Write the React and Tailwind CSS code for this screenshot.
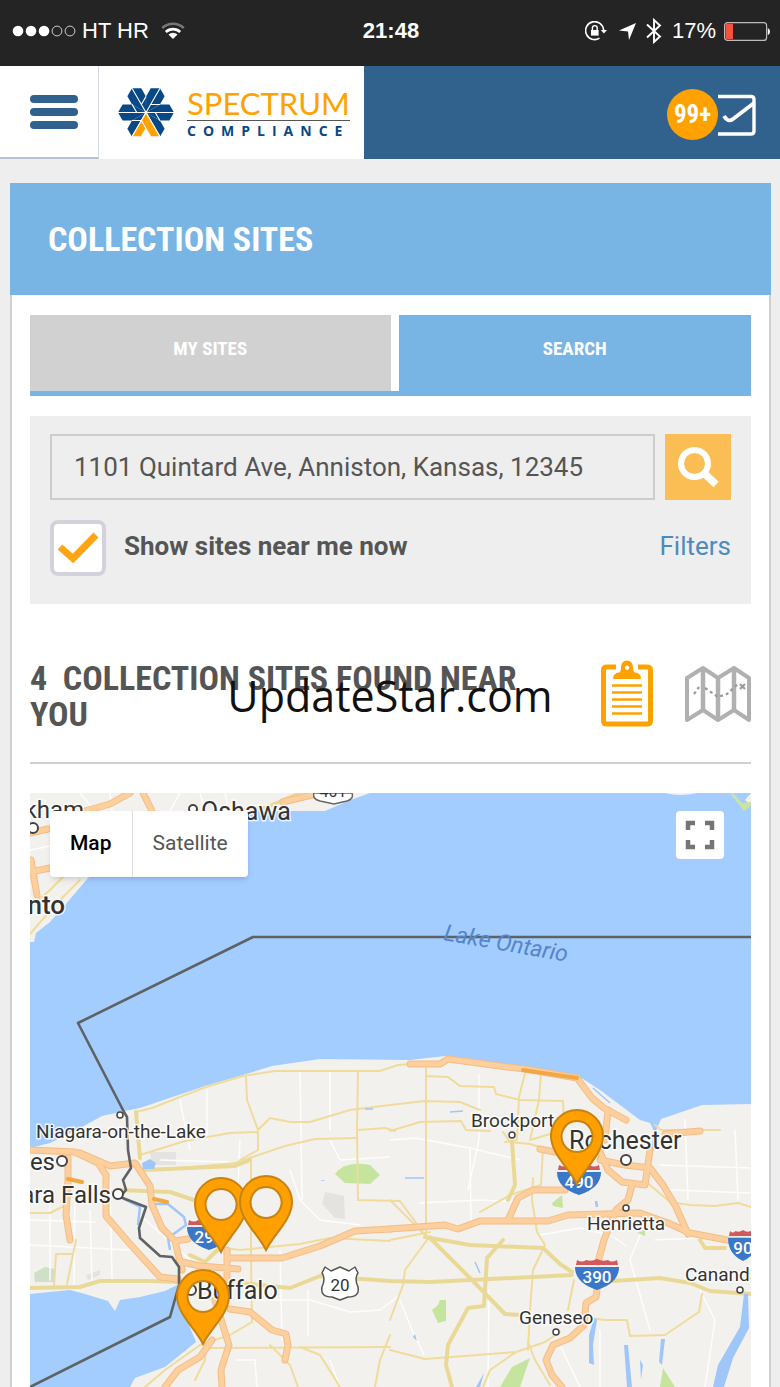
import { useState } from "react";

const LOCAL_ROADS = [
  "M300 1072 L302 1200 M330 1072 L330 1130 M207 1090 L207 1140 M180 1100 L190 1150 M479 1075 L479 1140 L468 1190",
  "M240 1140 L238 1190 L252 1215 M330 1140 L340 1160 L390 1157 M390 1140 L415 1138 L470 1148 L520 1160",
  "M420 1203 L480 1200 L520 1202 M470 1150 L471 1220 M280 1250 L282 1340 M308 1290 L308 1335",
  "M240 1300 L310 1300 L350 1312 L380 1310 L400 1295 M640 1235 L630 1260 L650 1330 M655 1240 L700 1238",
  "M540 1235 L580 1228 L612 1236 L626 1246 M685 1120 L688 1200 M735 1130 L738 1200 M660 1165 L751 1168 M670 1190 L751 1193",
  "M489 1290 L488 1387 M400 1300 L412 1330 L424 1355 M50 1190 L50 1280 M75 1190 L74 1285 M90 1210 L92 1280 M110 1180 L112 1280",
  "M30 1245 L130 1250 M30 1220 L95 1222 M140 1215 L190 1260 M160 1160 L230 1162 M290 1170 L300 1200 L320 1220 L360 1225",
  "M235 1360 L255 1360 L257 1387 M330 1360 L340 1387 M700 1290 L715 1320 L705 1387 M600 1330 L600 1387 M560 1345 L580 1387",
  "M45 800 L60 870 M30 850 L50 846 M80 793 L95 811 M110 793 L112 811 M180 793 L170 811 M200 793 L205 811 M225 793 L228 806",
];

const MINOR_ROADS = [
  "M136 1112 L152 1108 L180 1097 L206 1087 L243 1076 L275 1071 L380 1071 L398 1065 L410 1064",
  "M246 1077 L247 1100 L258 1130 L270 1118 L290 1122 L310 1122 L350 1110 L390 1105 L425 1101 L460 1102 L480 1110",
  "M140 1155 L185 1141 L230 1133 L258 1132 L258 1150 L240 1160",
  "M358 1072 L357 1130 L358 1200 L400 1201 L425 1235",
  "M358 1130 L385 1128 L395 1131 M160 1170 L235 1163 L285 1146 L315 1139 L357 1138",
  "M426 1068 L426 1238 M426 1076 L448 1077 L460 1086 L494 1087 L496 1094 L520 1100 L563 1101 L564 1120",
  "M390 1131 L420 1122 L461 1121 L466 1130 L490 1131 M525 1073 L519 1097 L517 1140 L505 1142",
  "M541 1073 L539 1100 L530 1140 L560 1131 M503 1132 L510 1142 L530 1144 L543 1148 L541 1185 L510 1195 L480 1212",
  "M30 1213 L50 1213 L66 1205 M56 1254 L72 1254 M76 1240 L67 1284 M56 1254 L54 1286",
  "M251 1160 L251 1258 L252 1322 L230 1335 L200 1345 M200 1245 L240 1250 L300 1244 L330 1238 L390 1241",
  "M210 1348 L390 1347 M300 1347 L320 1355 L340 1387 M270 1345 L290 1365 L298 1387 M390 1335 L380 1360 L375 1387",
  "M533 1178 L532 1200 L537 1232 L545 1245 L533 1270 L530 1310 L528 1350",
  "M574 1280 L568 1310 M590 1318 L605 1320 L627 1320 L630 1336 L665 1335 L690 1318 L699 1312 L702 1294",
  "M390 1350 L425 1359 L516 1352 L545 1342 L560 1332 M528 1342 L535 1360 L550 1385 M516 1352 L490 1370 L483 1387",
  "M644 1180 L670 1202 L690 1205 L715 1206 L738 1203 L751 1207 M430 1236 L405 1270 L403 1285 L390 1320",
  "M145 1387 L165 1370 L200 1345 M195 1380 L205 1360 L206 1345 M655 1125 L661 1130 L720 1130",
  "M390 1240 L430 1232 M390 1200 L410 1220 L428 1238 M30 907 L50 890 L70 870 M30 934 L55 905 L80 880",
];

const MAJOR_ROADS = [
  "M30 1288 L80 1287 L100 1281 L150 1281 L178 1282 M230 1282 L290 1288 L320 1276 L390 1281 L430 1282 L572 1275",
  "M613 1281 L660 1278 L690 1283 L710 1291 L751 1294 M425 1237 L470 1245 L543 1248 L560 1264 L572 1272",
  "M430 1238 L470 1278 L505 1314 L520 1315 M503 1240 L487 1258 L484 1306 L468 1308 L448 1345 L446 1365 L452 1387",
  "M136 1112 L140 1158 M250 1160 L235 1166 L145 1170 M512 1142 L515 1185 L508 1200",
  "M120 1190 L170 1192 L200 1202 M190 1255 L205 1262 L230 1238 M700 1240 L705 1248 L725 1248",
  "M300 793 L265 808 L240 811",
];

const HIGHWAYS = [
  "M30 1150 L75 1152 L98 1163 L106 1175 L106 1216 L130 1244 L160 1277 L178 1279",
  "M68 1158 L68 1180 L66 1215 L70 1240 M80 1153 L110 1166 L135 1163 L150 1186 L152 1205 L162 1228 L175 1241 L182 1270",
  "M175 1241 L188 1239 M182 1262 L200 1266 L238 1269 M227 1250 L227 1280 M227 1258 L282 1258 L320 1246 L355 1231 L390 1229",
  "M390 1229 L445 1225 L458 1229 L480 1221 L548 1221 L568 1215 L640 1213 L668 1223 L690 1233 L727 1240 L751 1241",
  "M508 1220 L518 1198 L533 1190 L565 1190 M540 1149 L555 1152 M600 1152 L608 1170 L622 1182 L645 1185 L650 1150",
  "M600 1160 L625 1165 L650 1168 L663 1185 L676 1207 L688 1234 M632 1185 L628 1200 L616 1210 L604 1240 L598 1262",
  "M597 1290 L596 1297 L586 1303 L584 1325 L570 1338 L553 1345 L546 1360 L552 1375 L562 1387",
  "M608 1110 L605 1140 M410 1064 L440 1064 L448 1059 L478 1063 L500 1066 L525 1069 L577 1078 L592 1098 L604 1108 L626 1120",
  "M230 1309 L250 1312 L272 1330 L286 1334 L288 1345 L285 1360 M215 1300 L229 1345 L221 1370 L222 1387",
  "M212 1340 L200 1357 L178 1370 L165 1387 M665 1134 L700 1131",
  "M30 833 L48 829 M30 872 L50 868 M31 860 L37 895 M85 811 L110 804 L130 793 M143 793 L152 811 M283 802 L320 793",
];

const LABELS = [
  { text: "Markham", x: 84, y: 818, size: 24, anchor: "end" },
  { text: "Oshawa", x: 201, y: 820, size: 25 },
  { text: "Toronto", x: 65, y: 914, size: 26, anchor: "end", weight: 500 },
  { text: "Niagara-on-the-Lake", x: 36, y: 1138, size: 19 },
  { text: "St. Catharines", x: 55, y: 1170, size: 24, anchor: "end" },
  { text: "Niagara Falls", x: 111, y: 1203, size: 24, anchor: "end" },
  { text: "Buffalo", x: 197, y: 1299, size: 25 },
  { text: "Brockport", x: 471, y: 1127, size: 19 },
  { text: "Rochester", x: 569, y: 1149, size: 25 },
  { text: "Henrietta", x: 587, y: 1230, size: 19 },
  { text: "Geneseo", x: 519, y: 1324, size: 19 },
  { text: "Canandaigua", x: 685, y: 1281, size: 19 },
];

const TOWNS = [
  [120, 1115, 3], [62, 1161, 5], [118, 1194, 5], [191, 1290, 5], [512, 1135, 3],
  [626, 1160, 5], [626, 1208, 3], [556, 1332, 3], [740, 1290, 3], [193, 809, 4], [33, 828, 5],
];

const SHIELDS = [
  { text: "290", x: 209, y: 1234, half: 22 },
  { text: "490", x: 579, y: 1179, half: 22 },
  { text: "390", x: 597, y: 1274, half: 22 },
  { text: "90", x: 743, y: 1245, half: 15 },
];

const SITES = [
  { x: 221, y: 1205 },
  { x: 266, y: 1203 },
  { x: 203, y: 1297 },
  { x: 577, y: 1137 },
];

const StatusBar = () => (
  <div className="bg-[#242424] text-white h-[66px] pl-3 pr-2.5 pb-1 flex items-center font-['Liberation_Sans',sans-serif] text-[22px] leading-none">
    <div className="flex-1 flex items-center">
      <svg width="66" height="12" viewBox="0 0 66 12">
        {[6, 19, 32].map((cx) => <circle key={cx} cx={cx} cy="6" r="5.3" fill="#fff" />)}
        {[45, 58].map((cx) => <circle key={cx} cx={cx} cy="6" r="4.9" fill="none" stroke="#ccc" />)}
      </svg>
      <span className="ml-1">HT HR</span>
      <svg className="ml-3" width="24" height="18" viewBox="0 0 24 18" fill="none" strokeWidth="2.6">
        <path d="M1.2 6 A16 16 0 0 1 22.8 6" stroke="#777" />
        <path d="M4.8 10 A10.5 10.5 0 0 1 19.2 10" stroke="#fff" />
        <path d="M12 17 L7.5 12.5 A6.5 6.5 0 0 1 16.5 12.5 Z" fill="#fff" />
      </svg>
    </div>
    <span className="font-bold">21:48</span>
    <div className="flex-1 flex items-center justify-end">
      <svg width="22" height="20" viewBox="0 0 22 20" fill="none" stroke="#fff">
        <path d="M18.6 9 A9 9 0 1 0 14.5 17.2" strokeWidth="1.6" />
        <path d="M15.8 9 H22 L18.9 12.6 Z" fill="#fff" stroke="none" />
        <rect x="6" y="9" width="7.6" height="5.6" fill="#fff" stroke="none" />
        <path d="M7.4 9 V7 A2.4 2.4 0 0 1 12.2 7 V9" strokeWidth="1.4" />
      </svg>
      <svg className="ml-3" width="17" height="17" viewBox="0 0 17 17">
        <path d="M17 0 L10 17 L9 8.5 L0 7.5 Z" fill="#fff" />
      </svg>
      <svg className="ml-2.5" width="16" height="26" viewBox="0 0 16 26" fill="none" stroke="#fff" strokeWidth="1.9">
        <path d="M1 6.5 L14 18.5 L8 24 V2 L14 7.5 L1 19.5" />
      </svg>
      <span className="ml-2.5">17%</span>
      <svg className="ml-2" width="46" height="19" viewBox="0 0 46 19">
        <rect x="0.6" y="0.6" width="42" height="17.8" rx="3" fill="none" stroke="#bbb" strokeWidth="1.2" />
        <path d="M3 1.8 H9 V17.2 H3 Q1.6 17.2 1.6 15 V4 Q1.6 1.8 3 1.8Z" fill="#f5523d" />
        <path d="M43.8 6 Q46 7 46 9.5 Q46 12 43.8 13 Z" fill="#fff" />
      </svg>
    </div>
  </div>
);

const Snowflake = () => (
  <svg width="58" height="52" viewBox="-29 -25.5 58 52">
    {[0, 60, 120, 180, 240, 300].map((angle) => (
      <path key={angle} transform={`rotate(${angle})`} d="M0 0 L14 -8 L23.4 -8 L28 0 L23.4 8 L14 8 Z" fill="#084887" />
    ))}
    <g stroke="#fff" strokeWidth="1.1">
      {[0, 60, 120, 180, 240, 300].map((angle) => (
        <path key={angle} transform={`rotate(${angle})`} d="M0 0 H28 M14 -8 H4.6" />
      ))}
      <path d="M-14 24.3 L0 0 L14 24.3 H4.8 L0 16 L-4.8 24.3 Z" fill="#ffa200" />
      <path d="M0 16 L-4.6 8" />
    </g>
  </svg>
);

const Header = () => (
  <header className="flex h-[93px] bg-[#31618d]">
    <button aria-label="Menu" className="w-[99px] bg-white border-r border-b-2 border-r-[#d5dae0] border-b-[#b4c2d2] flex flex-col items-center justify-center gap-[5px] pl-2.5">
      <span className="w-12 h-2 rounded-full bg-[#31618d]" />
      <span className="w-12 h-2 rounded-full bg-[#31618d]" />
      <span className="w-12 h-2 rounded-full bg-[#31618d]" />
    </button>
    <a href="#home" className="w-[265px] bg-white flex items-center gap-3 pl-[18px]">
      <Snowflake />
      <span className="flex flex-col">
        <span className="font-['Lato',sans-serif] text-[31px] leading-[34px] text-[#ffa200] border-b border-[#555]">SPECTRUM</span>
        <span className="mt-0.5 -mr-[7px] font-['Open_Sans',sans-serif] font-bold text-sm leading-4 text-[#084887] tracking-[7px]">COMPLIANCE</span>
      </span>
    </a>
    <div className="flex-1 flex items-center justify-end pr-6 pt-1">
      <span className="w-[51px] h-[51px] rounded-full bg-[#ffa200] text-white font-['Roboto_Condensed','Liberation_Sans_Narrow',Roboto,sans-serif] font-bold text-[25px] flex items-center justify-center">99+</span>
      <svg width="38" height="42" viewBox="0 0 38 42" fill="none" stroke="#fff" strokeWidth="3.4">
        <path d="M0 2.5 H33 Q36 2.5 36 5.5 V37 Q36 40 33 40 H-1" />
        <path d="M6 22 Q10 29 15 25 L36 9" strokeWidth="3.8" />
      </svg>
    </div>
  </header>
);

const ClipboardIcon = () => (
  <svg width="52" height="67" viewBox="0 0 52 67">
    <path d="M15 7 H6 Q2.5 7 2.5 10 V61 Q2.5 64 6 64 H46 Q49.5 64 49.5 61 V10 Q49.5 7 46 7 H37" fill="none" stroke="#ffa200" strokeWidth="5" />
    <path fillRule="evenodd" d="M12 19 Q12 13 18 12.5 Q20 12 20 7 Q20.5 0.5 26 0.5 Q31.5 0.5 32 7 Q32 12 34 12.5 Q40 13 40 19 Z M26 5.5 a2.2 2.2 0 1 0 0.1 0 Z" fill="#ffa200" />
    <path d="M11 25.5 H41 M11 32.5 H41 M11 39.5 H41 M11 46.5 H41 M11 53.5 H41" stroke="#ffa200" strokeWidth="2.4" />
  </svg>
);

const FoldedMapIcon = () => (
  <svg width="66" height="58" viewBox="0 0 66 58" fill="none" stroke="#b0b0b0" strokeLinejoin="round">
    <path d="M2 13 L18 3 L33 13 L49 3 L64 13 V55 L49 45 L33 55 L18 45 L2 55 Z" strokeWidth="4" />
    <path d="M18 3 V45 M33 13 V55 M49 3 V45" strokeWidth="4.5" />
    <path d="M9 29 L14 22 M20 23 L33 32 L42 29 L53 19" stroke="#999" strokeWidth="2.2" strokeDasharray="3 3" />
    <path d="M55 19 L60 24 M60 19 L55 24" stroke="#999" strokeWidth="2" />
  </svg>
);

const Interstate = ({ text, x, y, half }) => (
  <g transform={`translate(${x} ${y})`}>
    <path d={`M${-half + 2} -14 Q${-half / 1.5} -11 ${-half / 2} -14 Q${-half / 4} -12 0 -15 Q${half / 4} -12 ${half / 2} -14 Q${half / 1.5} -11 ${half - 2} -14 L${half - 1} -9 H${1 - half} Z`} fill="#d2595b" />
    <path d={`M${-half} -7 H${half} Q${half} 9 0 16 Q${-half} 9 ${-half} -7 Z`} fill="#3b77c8" />
    <text y="9" textAnchor="middle" fontSize="17" fontWeight="500" fill="#fff">{text}</text>
  </g>
);

const Pin = ({ x, y }) => (
  <path
    transform={`translate(${x} ${y})`}
    fillRule="evenodd"
    d="M0 47 C-7 32 -26 17 -26 -1 A26 26 0 0 1 26 -1 C26 17 7 32 0 47 Z M0 -16 A15.5 15.5 0 1 0 0.1 -16 Z"
    fill="#ff9f00"
    stroke="#c7820f"
    strokeWidth="2"
  />
);

const Roads = ({ paths, casing, color, width }) => (
  <g fill="none" strokeLinejoin="round" strokeLinecap="round">
    {casing && paths.map((d) => <path key={d} d={d} stroke={casing} strokeWidth={width + 2} />)}
    {paths.map((d) => <path key={d} d={d} stroke={color} strokeWidth={width} />)}
  </g>
);

const MapCanvas = () => (
  <svg
    className="block w-full h-[594px] font-['Roboto',sans-serif]"
    viewBox="30 793 721 594"
    preserveAspectRatio="xMidYMid slice"
    role="img"
    aria-label="Map of collection sites"
  >
    <rect x="30" y="793" width="721" height="594" fill="#a3ccff" />

    {/* land */}
    <g fill="#f3f1ee">
      <path d="M30 793 H370 L348 801 L325 811 H250 L120 850 L88 878 L65 905 L50 922 L36 933 L34 942 H30 Z" />
      <path d="M30 1148 L50 1143 L80 1128 L102 1116 L120 1112 L140 1108 L205 1086 L243 1075 L272 1066 L320 1059 L410 1060 L445 1056 L480 1060 L520 1068 L577 1075 L600 1090 L640 1120 L650 1123 L655 1133 L661 1119 L702 1105 L751 1104 V1387 H130 L135 1378 L165 1367 L196 1342 L186 1318 L177 1285 L165 1291 L140 1297 L120 1300 L115 1311 L108 1301 L85 1294 L70 1290 L30 1294 Z" />
      <path d="M665 793 Q680 797 697 793 Z M745 800 L751 793 V806 Z" />
    </g>
    <path d="M730 793 L744 811 L751 806 V802 L742 803 L733 793 Z" fill="#cbe3a0" />

    {/* parks and built-up areas */}
    <path d="M335 1174 Q345 1160 370 1165 L380 1175 L370 1184 L345 1183 Z" fill="#c5e59f" />
    <path d="M432 1310 L438 1305 L440 1300 L446 1300 V1321 L438 1323 Z M552 1203 L562 1195 L563 1208 L553 1206 Z M500 1387 L512 1367 L530 1358 L520 1387 Z M660 1387 L663 1368 L675 1387 Z M637 1233 L645 1230 V1236 Z" fill="#c5e59f" />
    <path d="M34 1273 L45 1267 L55 1269 V1282 H35 Z" fill="#d0dfc8" />
    <path d="M150 1152 H176 V1165 H152 Z M325 1192 L344 1196 L345 1219 L335 1218 L322 1204 Z M86 1275 L100 1270 V1275 L88 1280 Z" fill="#e4e3df" />

    <Roads paths={LOCAL_ROADS} color="#fdfdfc" width={1.5} />
    <Roads paths={MINOR_ROADS} color="#efdc9c" width={2} />
    <Roads paths={MAJOR_ROADS} color="#ead996" width={4} />

    {/* rivers and small lakes */}
    <g fill="#9fc6f8">
      <path d="M744 1294 H748 L749 1328 L733 1358 L724 1387 H713 L718 1365 L740 1327 Z" />
      <path d="M589 1335 L594 1318 L597 1320 L593 1345 L594 1365 L589 1363 Z M624 1345 L628 1345 L632 1387 L627 1387 Z M661 1339 L665 1339 L662 1365 L659 1362 Z M640 1360 L643 1365 L641 1380 Z M142 1163 L150 1159 L156 1163 L154 1169 L143 1169 Z M322 1180 L326 1181 H321 Z M476 1387 L484 1373 L480 1387 Z M415 1334 L417 1341 L413 1337 Z" />
    </g>
    <path d="M124 1199 L140 1207 L138 1225 M152 1204 L168 1204 L184 1217 L186 1225 L168 1238 L170 1250 M596 1201 L597 1207 M655 1128 L653 1150" fill="none" stroke="#9fc6f8" strokeWidth="2.5" />
    <path d="M405 1178 H424 M450 1112 L463 1111 M365 1109 H373 M475 1262 L480 1273 M593 1088 L610 1103" fill="none" stroke="#9fc6f8" strokeWidth="1.5" />

    <Roads paths={HIGHWAYS} color="#fccf9c" casing="#f3bd88" width={5} />
    <path d="M523 1070 L577 1078 M68 1179 L82 1182 M154 1199 L167 1202" fill="none" stroke="#f2a745" strokeWidth="4" strokeLinecap="round" />

    {/* border */}
    <path d="M751 937 H253 L78 1023 L124 1112 L127 1117 L128 1150 L131 1168 L123 1180 L126 1190 L120 1197 L146 1207 L139 1228 L140 1238 L160 1256 L172 1257 L179 1267 L179 1285 L170 1317 L30 1387" fill="none" stroke="#5f6265" strokeWidth="2.6" strokeLinejoin="round" />

    <path d="M314 793 Q312 799 320 801 L334 804 L347 801 Q354 799 352 793 Z" fill="#fff" stroke="#666" strokeWidth="1.5" />
    <text x="333" y="797" textAnchor="middle" fontSize="16" fill="#333">401</text>

    <g transform="translate(340 1284)">
      <path d="M-15 -17 L-9 -13 L0 -17 L9 -13 L15 -17 L18 -11 Q14 -6 18 3 Q20 13 8 13 L0 16 L-8 13 Q-20 13 -18 3 Q-14 -6 -18 -11 Z" fill="#fff" stroke="#555" strokeWidth="1.5" strokeLinejoin="round" />
      <text y="7" textAnchor="middle" fontSize="17" fill="#333">20</text>
    </g>
    {SHIELDS.map((s) => <Interstate key={s.text} {...s} />)}

    {TOWNS.map(([x, y, r]) => (
      <circle key={`${x}-${y}`} cx={x} cy={y} r={r} fill="#fff" stroke="#444" strokeWidth={r > 3 ? 2 : 1.5} />
    ))}
    {LABELS.map(({ text, x, y, size, anchor, weight }) => (
      <text key={text} x={x} y={y} fontSize={size} textAnchor={anchor} fontWeight={weight} fill="#333" stroke="#fff" strokeWidth="3" strokeOpacity="0.8" paintOrder="stroke">
        {text}
      </text>
    ))}
    <text transform="translate(443 940) rotate(10)" fontSize="23" fontStyle="italic" fill="#5585c9">Lake Ontario</text>

    {SITES.map((s) => <Pin key={`${s.x}-${s.y}`} {...s} />)}
  </svg>
);

export default function App() {
  const [address, setAddress] = useState("1101 Quintard Ave, Anniston, Kansas, 12345");
  const [nearMe, setNearMe] = useState(true);

  return (
    <div className="relative bg-[#eeeeee] text-[#555] font-['Roboto',sans-serif] overflow-hidden">
      <StatusBar />
      <Header />

      <main className="mt-6 ml-2.5 mr-[9px]">
        <div className="bg-[#78b4e4] h-28 px-[38px] flex items-center">
          <h1 className="text-white font-bold text-[34px] leading-9 font-['Roboto_Condensed','Liberation_Sans_Narrow',Roboto,sans-serif]">COLLECTION SITES</h1>
        </div>

        <div className="bg-white border-x-2 border-[#cfcfcf] px-[18px] pt-5">
          {/* Tabs */}
          <div className="flex gap-2 border-b-[5px] border-[#78b4e4] text-white font-bold text-[19px] font-['Roboto_Condensed','Liberation_Sans_Narrow',Roboto,sans-serif]">
            <button className="w-1/2 h-[76px] pb-2 bg-[#d1d1d1]">MY SITES</button>
            <button className="flex-1 h-[76px] pb-2 bg-[#78b4e4]">SEARCH</button>
          </div>

          {/* Search */}
          <div className="mt-5 bg-[#eeeeee] px-5 pt-[18px] pb-7">
            <div className="flex gap-2.5">
              <input
                type="text"
                aria-label="Address"
                value={address}
                onChange={(e) => setAddress(e.target.value)}
                className="flex-1 min-w-0 h-[66px] border-2 border-[#cccccc] bg-transparent px-[22px] text-[26px] text-[#555]"
              />
              <button aria-label="Search" className="w-[66px] h-[66px] bg-[#fabe55] flex items-center justify-center">
                <svg width="42" height="42" viewBox="0 0 42 42" fill="none" stroke="#fff">
                  <circle cx="17.5" cy="17.5" r="13.5" strokeWidth="6" />
                  <path d="M27 27 L39 38.5" strokeWidth="7.5" />
                </svg>
              </button>
            </div>
            <div className="mt-5 flex items-center justify-between text-[26px] leading-8">
              <label className="flex items-center gap-[18px] font-bold">
                <span className="relative w-14 h-14">
                  <input
                    type="checkbox"
                    checked={nearMe}
                    onChange={(e) => setNearMe(e.target.checked)}
                    className="block appearance-none w-14 h-14 bg-white border-4 border-[#d2d2dc] rounded-lg"
                  />
                  {nearMe && (
                    <svg className="absolute inset-0 pointer-events-none" width="56" height="56" viewBox="0 0 56 56">
                      <path d="M10 27 L23 38.5 L46 15" fill="none" stroke="#ffa515" strokeWidth="7" />
                    </svg>
                  )}
                </span>
                <span className="pb-1">Show sites near me now</span>
              </label>
              <a href="#filters" className="pb-1 text-[#4c8bc0]">Filters</a>
            </div>
          </div>

          {/* Results */}
          <div className="pt-14 pb-[30px] border-b-2 border-[#cfcfcf] flex items-start justify-between">
            <h2 className="w-[510px] font-bold text-[34px] leading-9 whitespace-pre-wrap font-['Roboto_Condensed','Liberation_Sans_Narrow',Roboto,sans-serif]">4  COLLECTION SITES FOUND NEAR YOU</h2>
            <div className="flex items-center gap-8">
              <button aria-label="List view"><ClipboardIcon /></button>
              <button aria-label="Map view"><FoldedMapIcon /></button>
            </div>
          </div>

          <div className="relative mt-[29px]">
            <MapCanvas />
            <div className="absolute left-5 top-[18px] h-[66px] flex bg-white rounded-sm shadow-md text-[21px]">
              <button className="px-5 font-medium text-black border-r border-[#ddd]">Map</button>
              <button className="px-5 text-[#565656]">Satellite</button>
            </div>
            <button aria-label="Fullscreen" className="absolute right-[27px] top-[18px] w-12 h-12 bg-white rounded-sm flex items-center justify-center">
              <svg width="30" height="30" viewBox="0 0 30 30" fill="none" stroke="#757575" strokeWidth="4.5">
                <path d="M3 10 V3 H10 M20 3 H27 V10 M27 20 V27 H20 M10 27 H3 V20" />
              </svg>
            </button>
          </div>
        </div>
      </main>

      {/* Watermark */}
      <div className="absolute inset-0 flex items-center justify-center pt-1 pointer-events-none">
        <span className="font-['Open_Sans',sans-serif] text-[43px] leading-none text-[#111]">UpdateStar.com</span>
      </div>
    </div>
  );
}
